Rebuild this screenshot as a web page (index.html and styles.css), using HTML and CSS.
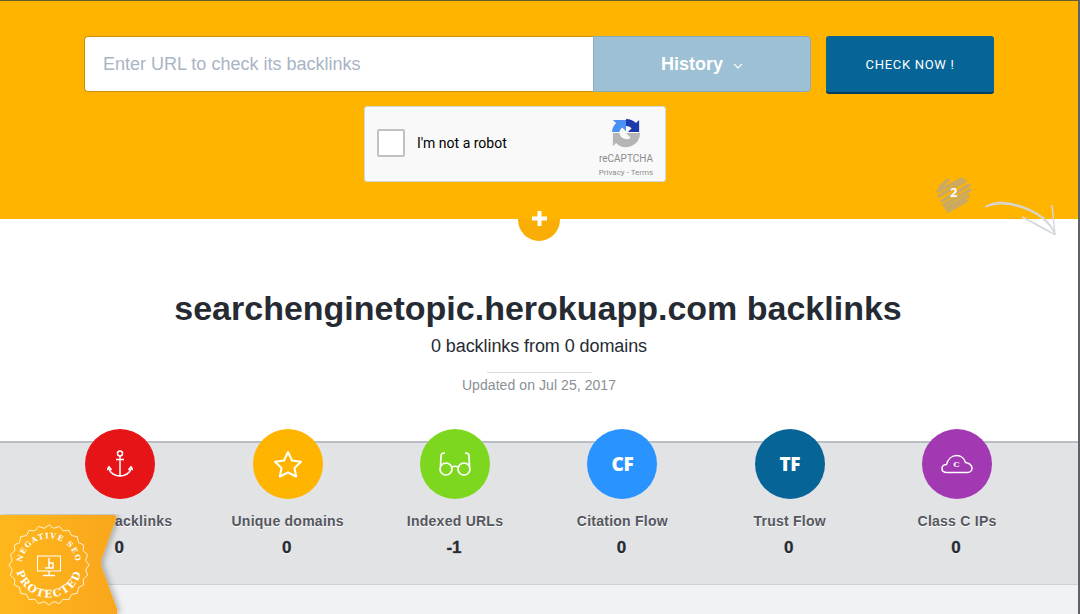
FILE: index.html
```html
<!DOCTYPE html>
<html lang="en">

<head>
    <meta charset="UTF-8">
    <title>Backlinks</title>
    <link rel="stylesheet" href="styles.css">
</head>

<body>
    <div class="page">
        <header class="top">
            <form class="check-form">
                <div class="url-box">
                    <input class="url-input" type="text" placeholder="Enter URL to check its backlinks">
                    <div class="history">History
                        <svg class="chevron" width="10" height="6" viewBox="0 0 10 6"><path d="M1 1l4 4 4-4" fill="none" stroke="#fff" stroke-width="1.1"/></svg>
                    </div>
                </div>
                <button class="check-button" type="button">CHECK NOW !</button>
            </form>

            <div class="captcha">
                <span class="captcha-box"></span>
                <span class="captcha-label">I'm not a robot</span>
                <div class="captcha-logo">
                    <svg width="30" height="30" viewBox="0 0 32 32">
                        <path d="M16 1A15 15 0 0 1 26.600 5.400L30 2V15H18L22 11A8 8 0 0 0 16 8.500Z" fill="#1c3aa9"/>
                        <path d="M1 15A15 15 0 0 1 5.400 5.400L2 2H16V14L12 10A8 8 0 0 0 9 15Z" fill="#4a90f5"/>
                        <path d="M9 16A7.500 7.500 0 0 0 21 21L16 16H31A15 15 0 0 1 5.400 26.600L2 30V16Z" fill="#b5b5b5"/>
                    </svg>
                    <div class="captcha-name">reCAPTCHA</div>
                    <div class="captcha-links">Privacy - Terms</div>
                </div>
            </div>

            <div class="scribble">
                <svg width="38" height="38" viewBox="0 0 38 38">
                    <path d="M13 4L5 11M27 3L3 15M30 5L4 20M34 9L7 25M35 14L9 29M33 20L11 32M31 25L13 35" fill="none" stroke="#c9a964" stroke-width="3.4" stroke-linecap="round"/>
                </svg>
                <span class="scribble-num">2</span>
            </div>

            <svg class="arrow" width="76" height="38" viewBox="0 0 76 38">
                <path d="M1 7C8 2 20 1 34 5 50 10 66 19 71 34M1 7C14 2 30 4 44 10 56 15 66 24 71 34" fill="none" stroke="#d5d8de" stroke-width="1.2"/>
                <path d="M71 35L68 5M71 35C62 29 48 22 38 17M71 34C62 31 52 24 42 19" fill="none" stroke="#d5d8de" stroke-width="1.5"/>
            </svg>

            <div class="plus">
                <svg width="15" height="15" viewBox="0 0 15 15"><path d="M7.500 0v15M0 7.500h15" stroke="#fff" stroke-width="4"/></svg>
            </div>
        </header>

        <section class="summary">
            <h1>searchenginetopic.herokuapp.com backlinks</h1>
            <div class="summary-sub">0 backlinks from 0 domains</div>
            <div class="summary-date">Updated on Jul 25, 2017</div>
        </section>

        <section class="stats">
            <div class="stat">
                <div class="stat-icon red">
                    <svg width="26" height="28" viewBox="0 0 26 28" fill="none" stroke="#fff" stroke-width="1.5">
                        <circle cx="13" cy="3.500" r="2.500"/>
                        <path d="M13 6v20M9 9.500h8M2 19c1 4 6 7 11 7s10-3 11-7"/>
                        <path d="M0 20l2-3 2.500 3M21.500 20l2.500-3 2 3" stroke-width="1.7"/>
                    </svg>
                </div>
                <div class="stat-label">Total backlinks</div>
                <div class="stat-value">0</div>
            </div>
            <div class="stat">
                <div class="stat-icon amber">
                    <svg width="30" height="28" viewBox="0 0 30 28"><path d="M15 2l4 8.500 9 1.200-6.500 6.300 1.700 8.500L15 22.500 6.800 26.500 8.500 18 2 11.700l9-1.200z" fill="none" stroke="#fff" stroke-width="2" stroke-linejoin="round"/></svg>
                </div>
                <div class="stat-label">Unique domains</div>
                <div class="stat-value">0</div>
            </div>
            <div class="stat">
                <div class="stat-icon green">
                    <svg width="34" height="26" viewBox="0 0 34 26" fill="none" stroke="#fff" stroke-width="1.7">
                        <circle cx="8" cy="18" r="6"/>
                        <circle cx="26" cy="18" r="6"/>
                        <path d="M14 16c2-1 4-1 6 0M2.500 16L3 5c0-2 1-3 4-3M31.500 16L31 5c0-2-1-3-4-3"/>
                    </svg>
                </div>
                <div class="stat-label">Indexed URLs</div>
                <div class="stat-value">-1</div>
            </div>
            <div class="stat">
                <div class="stat-icon blue"><span class="stat-letters">CF</span></div>
                <div class="stat-label">Citation Flow</div>
                <div class="stat-value">0</div>
            </div>
            <div class="stat">
                <div class="stat-icon navy"><span class="stat-letters">TF</span></div>
                <div class="stat-label">Trust Flow</div>
                <div class="stat-value">0</div>
            </div>
            <div class="stat">
                <div class="stat-icon purple">
                    <svg class="cloud" width="32" height="20" viewBox="0 0 32 20">
                        <path d="M6 18.500C3 18.500 1 16.800 1 14.500c0-2.300 2-4 4.500-4C7 5 11 1.500 15.500 1.500c4.500 0 8 3 9 7 3.500.3 6.500 2.800 6.500 5.700 0 2.500-2 4.300-4.500 4.300z" fill="none" stroke="#fff" stroke-width="1.5"/>
                        <text class="cloud-letter" x="15.500" y="13" text-anchor="middle">C</text>
                    </svg>
                </div>
                <div class="stat-label">Class C IPs</div>
                <div class="stat-value">0</div>
            </div>
        </section>

        <div class="bottom"></div>

        <div class="badge">
            <svg width="126" height="100" viewBox="0 0 126 100">
                <defs>
                    <linearGradient id="ribbon" x1="0" x2="1" y1="0" y2="0">
                        <stop offset="0" stop-color="#ffb81c"/>
                        <stop offset="1" stop-color="#f9a61d"/>
                    </linearGradient>
                    <filter id="shade" x="-10%" y="-10%" width="125%" height="120%">
                        <feDropShadow dx="2" dy="0" stdDeviation="3" flood-color="#000" flood-opacity="0.3"/>
                    </filter>
                    <path id="arc-top" d="M-27 -2A27.100 27.100 0 0 1 27 -2"/>
                    <path id="arc-bottom" d="M-33 3A33.200 33.200 0 0 0 33 3"/>
                </defs>
                <path d="M0 1H113q4 0 3 4L102 44q-2 5 0 10L117 95q1 3 0 5H0z" fill="url(#ribbon)" filter="url(#shade)"/>
                <g transform="translate(49 51)">
                    <path d="M40 0L36.700 4.800 38.600 10.400 34.200 14.200 34.600 20 29.400 22.500 28.300 28.300 22.500 29.400 20 34.600 14.200 34.200 10.400 38.600 4.800 36.700 0 40-4.800 36.700-10.400 38.600-14.200 34.200-20 34.600-22.500 29.400-28.300 28.300-29.400 22.500-34.600 20-34.200 14.200-38.600 10.400-36.700 4.800-40 0-36.700-4.800-38.600-10.400-34.200-14.200-34.600-20-29.400-22.500-28.300-28.300-22.500-29.400-20-34.600-14.200-34.200-10.400-38.600-4.800-36.700 0-40 4.800-36.700 10.400-38.600 14.200-34.200 20-34.600 22.500-29.400 28.300-28.300 29.400-22.500 34.600-20 34.200-14.200 38.600-10.400 36.700-4.800z" fill="none" stroke="#fff" stroke-width="0.8" stroke-linejoin="round"/>
                    <text class="seal-small" text-anchor="middle"><textPath href="#arc-top" startOffset="50%">NEGATIVE SEO</textPath></text>
                    <text class="seal-big" text-anchor="middle"><textPath href="#arc-bottom" startOffset="50%">PROTECTED</textPath></text>
                    <g fill="none" stroke="#fff">
                        <rect x="-11.500" y="-9" width="23" height="15" stroke-width="1"/>
                        <path d="M0 6v4M-6 10.500H6" stroke-width="1.3"/>
                        <path d="M0 -7V3H-4M0 -2H4V3H0" stroke-width="1.5"/>
                    </g>
                </g>
            </svg>
        </div>
    </div>
    <div class="edge"></div>
</body>

</html>
```

FILE: styles.css
```css
body {
    margin: 0;
    height: 614px;
    overflow: hidden;
    display: flex;
    font-family: "Liberation Sans", Arial, sans-serif;
    background-color: #fff;
}

.page {
    width: 1078px;
    position: relative;
    flex-shrink: 0;
}

.edge {
    width: 2px;
    background-color: #5f6368;
}

.top {
    height: 218px;
    background-color: #ffb400;
    border-top: 1px solid #6a5a30;
    position: relative;
    display: flex;
    flex-direction: column;
    align-items: center;
}

.check-form {
    display: flex;
    gap: 15px;
    margin-top: 35px;
}

.url-box {
    display: flex;
    width: 727px;
    height: 56px;
}

.url-input {
    width: 509px;
    flex-shrink: 0;
    border: 1px solid #c98f0a;
    border-right: none;
    border-radius: 4px 0 0 4px;
    outline: none;
    padding: 1px 18px 0;
    box-sizing: border-box;
    font-family: "Liberation Sans", Arial, sans-serif;
    font-size: 18px;
}

.url-input::placeholder {
    color: #a9b4c4;
    opacity: 1;
}

.history {
    flex: 1;
    background-color: #9dc0d4;
    border: 1px solid #8aaabf;
    border-radius: 0 4px 4px 0;
    padding-top: 1px;
    color: #fff;
    font-size: 18px;
    font-weight: bold;
    display: flex;
    align-items: center;
    justify-content: center;
    gap: 10px;
}

.chevron {
    margin-top: 2px;
}

.check-button {
    width: 168px;
    height: 58px;
    background-color: #066496;
    border: none;
    border-bottom: 2px solid #053c63;
    border-radius: 3px;
    color: #fff;
    font-family: Roboto, sans-serif;
    font-size: 13px;
    font-weight: 400;
    letter-spacing: 0.7px;
}

.captcha {
    width: 302px;
    height: 76px;
    box-sizing: border-box;
    margin-top: 12px;
    margin-right: 48px;
    background-color: #f9f9f9;
    border: 1px solid #d6d6d6;
    border-radius: 3px;
    display: flex;
    align-items: center;
    padding: 0 12px;
    color: #000;
}

.captcha-box {
    width: 28px;
    height: 28px;
    box-sizing: border-box;
    margin-top: -2px;
    background-color: #fff;
    border: 2px solid #c1c1c1;
    border-radius: 2px;
    margin-right: 12px;
}

.captcha-label {
    font-family: Roboto, sans-serif;
    font-size: 14px;
    flex: 1;
    margin-top: -2px;
}

.captcha-logo {
    width: 56px;
    display: flex;
    flex-direction: column;
    align-items: center;
    color: #8c8c8c;
    margin-right: -1px;
    margin-top: 7px;
}

.captcha-name {
    font-family: Roboto, sans-serif;
    font-size: 10px;
    margin-top: 5px;
}

.captcha-links {
    font-family: Roboto, sans-serif;
    font-size: 8px;
    margin-top: 4px;
    white-space: nowrap;
}

.scribble {
    position: absolute;
    left: 935px;
    top: 175px;
    width: 38px;
    height: 38px;
}

.scribble-num {
    position: absolute;
    left: 15px;
    top: 7px;
    color: #fff;
    font-family: "Open Sans", sans-serif;
    font-size: 13px;
    font-weight: bold;
}

.arrow {
    position: absolute;
    left: 984px;
    top: 199px;
}

.plus {
    position: absolute;
    left: 518px;
    top: 197px;
    width: 42px;
    height: 43px;
    border-radius: 50%;
    background: linear-gradient(#ffb400 50%, #f9ad05 50%);
    display: flex;
    align-items: center;
    justify-content: center;
}

.plus svg {
    margin-bottom: 2px;
}

.summary {
    height: 222px;
    box-sizing: border-box;
    padding-top: 70px;
    text-align: center;
}

h1 {
    margin: 0;
    padding-right: 2px;
    color: #262b33;
    font-size: 34px;
    line-height: 38px;
}

.summary-sub {
    color: #262b33;
    font-size: 18px;
    letter-spacing: -0.08px;
    line-height: 22px;
    margin-top: 8px;
}

.summary-date {
    width: 105px;
    margin: 15px auto 0;
    border-top: 1px solid #d8dade;
    padding-top: 3px;
    color: #8a8f96;
    font-size: 14px;
    letter-spacing: 0.07px;
    line-height: 18px;
    display: flex;
    justify-content: center;
    white-space: nowrap;
}

.stats {
    height: 144px;
    box-sizing: border-box;
    background-color: #e2e3e5;
    border-top: 2px solid #b9bdc4;
    border-bottom: 1px solid #cfd1d4;
    display: grid;
    grid-template-columns: repeat(6, 1fr);
    padding: 0 37.3px 0 36.7px;
}

.stat {
    display: flex;
    flex-direction: column;
    align-items: center;
    margin-top: -14px;
}

.stat-icon {
    width: 70px;
    height: 70px;
    border-radius: 50%;
    display: flex;
    align-items: center;
    justify-content: center;
}

.red { background-color: #e61317; }
.amber { background-color: #ffb400; }
.green { background-color: #7ed71f; }
.blue { background-color: #2994ff; }
.navy { background-color: #066496; }
.purple { background-color: #a239b2; }

.stat-letters {
    color: #fff;
    font-family: "Open Sans", sans-serif;
    font-size: 19px;
    font-weight: 800;
    letter-spacing: -0.5px;
}

.cloud-letter {
    fill: #fff;
    font-family: "DejaVu Serif", serif;
    font-size: 8px;
    font-weight: bold;
}

.stat-label {
    color: #55575f;
    font-size: 14px;
    font-weight: bold;
    letter-spacing: 0.25px;
    line-height: 18px;
    margin-top: 13px;
    text-shadow: 0 1px 0 #fff;
}

.stat-value {
    color: #262b33;
    font-size: 17px;
    font-weight: bold;
    -webkit-text-stroke: 0.3px #262b33;
    line-height: 20px;
    margin-top: 8px;
    margin-right: 2px;
    text-shadow: 0 1px 0 #fff;
}

.bottom {
    height: 29px;
    background-color: #f1f2f4;
}

.badge {
    position: absolute;
    left: 0;
    top: 514px;
    width: 126px;
    height: 100px;
}

.seal-small {
    fill: #fff;
    font-family: "DejaVu Serif", serif;
    font-size: 7.5px;
    font-weight: bold;
    letter-spacing: 1.1px;
}

.seal-big {
    fill: #fff;
    font-family: "DejaVu Serif", serif;
    font-size: 10.5px;
    font-weight: bold;
    letter-spacing: 1.6px;
}
```
